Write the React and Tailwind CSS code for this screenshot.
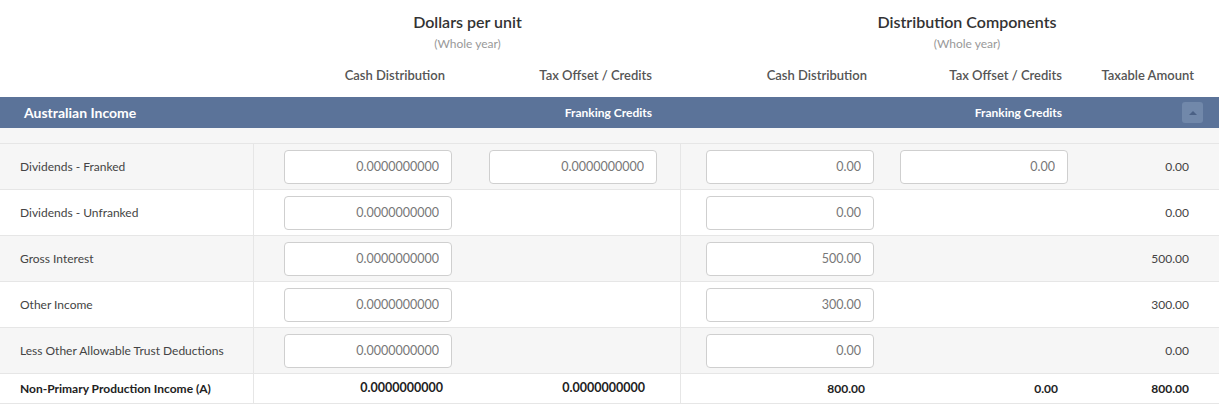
import React from "react";

const rows = [
  { label: "Dividends - Franked", a: "0.0000000000", b: "0.0000000000", c: "0.00", d: "0.00", e: "0.00" },
  { label: "Dividends - Unfranked", a: "0.0000000000", c: "0.00", e: "0.00" },
  { label: "Gross Interest", a: "0.0000000000", c: "500.00", e: "500.00" },
  { label: "Other Income", a: "0.0000000000", c: "300.00", e: "300.00" },
  { label: "Less Other Allowable Trust Deductions", a: "0.0000000000", c: "0.00", e: "0.00" },
];

const Field = ({ value }) => (
  <input
    readOnly
    value={value}
    className="h-[34px] w-[168px] rounded-[4px] border border-[#cfcfcf] bg-white pr-[12px] text-right text-[12.5px] text-[#777] outline-none"
  />
);

export default function App() {
  return (
    <div className="w-[1219px] bg-white text-[#333]" style={{ fontFamily: "Lato, 'Open Sans', sans-serif" }}>
      {/* GROUP HEADINGS */}
      <div className="flex h-[97px]">
        <div className="w-[254px]" />
        <div className="flex w-[427px] flex-col">
          <div className="pt-[11px] text-center text-[16px] font-semibold leading-[21px] text-[#333]">Dollars per unit</div>
          <div className="pt-[4px] text-center text-[12px] leading-[16px] text-[#999]">(Whole year)</div>
          <div className="flex pt-[15px] text-[13px] font-semibold leading-[17px] text-[#555]">
            <div className="w-[213px] pr-[22px] text-right">Cash Distribution</div>
            <div className="w-[214px] pr-[29px] text-right">Tax Offset / Credits</div>
          </div>
        </div>
        <div className="flex w-[538px] flex-col">
          <div className="pl-[34px] pt-[11px] text-center text-[16px] font-semibold leading-[21px] text-[#333]">Distribution Components</div>
          <div className="pl-[34px] pt-[4px] text-center text-[12px] leading-[16px] text-[#999]">(Whole year)</div>
          <div className="flex pt-[15px] text-[13px] font-semibold leading-[17px] text-[#555]">
            <div className="w-[206px] pr-[20px] text-right">Cash Distribution</div>
            <div className="w-[193px] pr-[18px] text-right">Tax Offset / Credits</div>
            <div className="flex-1 pr-[25px] text-right">Taxable Amount</div>
          </div>
        </div>
      </div>

      {/* SECTION BAR */}
      <div className="flex h-[31px] items-center bg-[#5b7399] text-white">
        <div className="w-[467px] pl-[24px] text-[14px] font-bold">Australian Income</div>
        <div className="w-[214px] pr-[29px] text-right text-[12px] font-bold">Franking Credits</div>
        <div className="w-[206px]" />
        <div className="w-[193px] pr-[18px] text-right text-[12px] font-bold">Franking Credits</div>
        <div className="flex flex-1 justify-end pr-[16px]">
          <button className="flex h-[21px] w-[21px] items-center justify-center rounded-[3px] bg-[#7188aa]">
            <span className="h-0 w-0 border-x-[4px] border-b-[4px] border-x-transparent border-b-[#4b6185]" />
          </button>
        </div>
      </div>
      <div className="h-[16px] border-b border-[#e6e6e6] bg-[#f6f6f6]" />

      {/* ROWS */}
      {rows.map((r, i) => (
        <div
          key={i}
          className={"flex h-[46px] items-center border-b border-[#e6e6e6] " + (i % 2 === 0 ? "bg-[#f6f6f6]" : "bg-white")}
        >
          <div className="flex h-full w-[254px] items-center border-r border-[#e6e6e6] pl-[20px] text-[12px] text-[#444]">
            {r.label}
          </div>
          <div className="w-[213px] pl-[30px]">
            <Field value={r.a} />
          </div>
          <div className="flex h-full w-[214px] items-center border-r border-[#e6e6e6] pl-[22px]">
            {r.b && <Field value={r.b} />}
          </div>
          <div className="w-[206px] pl-[25px]">
            <Field value={r.c} />
          </div>
          <div className="w-[193px] pl-[13px]">{r.d && <Field value={r.d} />}</div>
          <div className="flex-1 pr-[30px] text-right text-[12px] text-[#444]">{r.e}</div>
        </div>
      ))}

      {/* TOTAL */}
      <div className="flex h-[30px] items-center border-b border-[#e6e6e6] bg-white text-[12px] font-bold text-[#222]">
        <div className="flex h-full w-[254px] items-center border-r border-[#e6e6e6] pl-[20px]">
          Non-Primary Production Income (A)
        </div>
        <div className="w-[213px] pr-[24px] text-right text-[12.5px]">0.0000000000</div>
        <div className="flex h-full w-[214px] items-center justify-end border-r border-[#e6e6e6] pr-[35px] text-[12.5px]">0.0000000000</div>
        <div className="w-[206px] pr-[22px] text-right">800.00</div>
        <div className="w-[193px] pr-[22px] text-right">0.00</div>
        <div className="flex-1 pr-[30px] text-right">800.00</div>
      </div>
    </div>
  );
}
